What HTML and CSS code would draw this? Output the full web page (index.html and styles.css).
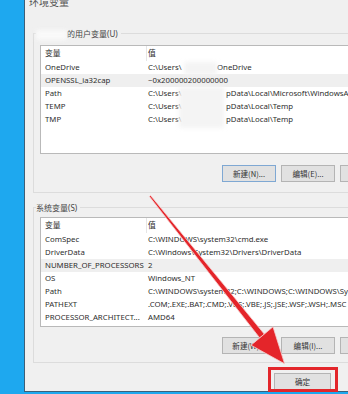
FILE: index.html
```html
<!DOCTYPE html>
<html lang="zh-CN">
<head>
    <meta charset="UTF-8">
    <title>环境变量</title>
    <link rel="stylesheet" href="styles.css">
</head>
<body>
    <div class="window">
        <h1 class="title">环境变量</h1>

        <div class="group group-user">
            <div class="group-label"><span class="name-blur"></span>的用户变量(U)</div>
            <div class="list list-user">
                <div class="row head"><div class="name">变量</div><div class="value">值</div></div>
                <div class="row"><div class="name">OneDrive</div><div class="value"><span class="pre short">C:\Users\</span>OneDrive</div></div>
                <div class="row sel"><div class="name">OPENSSL_ia32cap</div><div class="value">~0x200000200000000</div></div>
                <div class="row"><div class="name">Path</div><div class="value"><span class="pre">C:\Users\</span>pData\Local\Microsoft\WindowsApps</div></div>
                <div class="row"><div class="name">TEMP</div><div class="value"><span class="pre">C:\Users\</span>pData\Local\Temp</div></div>
                <div class="row"><div class="name">TMP</div><div class="value"><span class="pre">C:\Users\</span>pData\Local\Temp</div></div>
            </div>
            <div class="btns">
                <button class="default">新建(N)...</button>
                <button>编辑(E)...</button>
                <button>删除(D)</button>
            </div>
        </div>

        <div class="group group-sys">
            <div class="group-label">系统变量(S)</div>
            <div class="list list-sys">
                <div class="row head"><div class="name">变量</div><div class="value">值</div></div>
                <div class="row"><div class="name">ComSpec</div><div class="value">C:\WINDOWS\system32\cmd.exe</div></div>
                <div class="row"><div class="name">DriverData</div><div class="value">C:\Windows\System32\Drivers\DriverData</div></div>
                <div class="row sel"><div class="name">NUMBER_OF_PROCESSORS</div><div class="value">2</div></div>
                <div class="row"><div class="name">OS</div><div class="value">Windows_NT</div></div>
                <div class="row"><div class="name">Path</div><div class="value">C:\WINDOWS\system32;C:\WINDOWS;C:\WINDOWS\System32\Wbem;</div></div>
                <div class="row"><div class="name">PATHEXT</div><div class="value">.COM;.EXE;.BAT;.CMD;.VBS;.VBE;.JS;.JSE;.WSF;.WSH;.MSC</div></div>
                <div class="row"><div class="name">PROCESSOR_ARCHITECT...</div><div class="value">AMD64</div></div>
            </div>
            <div class="btns">
                <button>新建(W)...</button>
                <button>编辑(I)...</button>
                <button>删除(L)</button>
            </div>
        </div>

        <div class="footer">
            <button>确定</button>
        </div>
    </div>

    <!-- blurred user name in the paths -->
    <div class="path-blur blur-one"></div>
    <div class="path-blur blur-two"></div>
    <!-- annotation -->
    <div class="red-box"></div>
    <svg class="arrow" width="348" height="394" viewBox="0 0 348 394">
        <polygon points="150.6,195.5 149.4,196.5 259.7,337.9 264.3,334.1" fill="#e4252a" stroke="#f6d0d0" stroke-width="0.8"/>
        <polygon points="273,326.8 251,345.2 284.6,363.8" fill="#e4252a" stroke="#f6d0d0" stroke-width="0.8"/>
    </svg>
</body>
</html>
```

FILE: styles.css
```css
body {
    margin: 0;
    width: 348px;
    height: 394px;
    overflow: hidden;
    position: relative;
    background-color: #1ea8ef;
    font-family: "Noto Sans", "Noto Sans CJK SC", sans-serif;
    font-size: 7.8px;
    color: #2e2e2e;
}

.window {
    margin-left: 24px;
    height: 391px;
    background-color: #f0f0f0;
    border-left: 1px solid #3d5f78;
    border-bottom: 1px solid #3d5f78;
    overflow: hidden;
}

.title {
    margin: -4px 0 0 0;
    padding-left: 4px;
    font-size: 10px;
    line-height: 12px;
    font-weight: normal;
    color: #555;
}

.group {
    margin-left: 8px;
    margin-right: -30px;
    border: 1px solid #dcdcdc;
    border-right: none;
    padding-left: 6px;
}

.group-user {
    margin-top: 25px;
    padding-bottom: 10px;
}

.group-sys {
    margin-top: 14px;
    padding-bottom: 8px;
}

.group-label {
    display: table;
    margin: -7px 0 0 -4px;
    padding-right: 3px;
    line-height: 14px;
    font-size: 8px;
    color: #444;
    background-color: #f0f0f0;
}

.name-blur {
    display: inline-block;
    width: 31px;
    height: 10px;
    vertical-align: middle;
    background-color: #f9f9f9;
    filter: blur(2px);
}

.list {
    box-sizing: border-box;
    background: white;
    border: 1px solid #b9b9b9;
    overflow: hidden;
}

.list-user {
    margin-top: 4px;
    height: 109px;
}

.list-sys {
    margin-top: 2px;
    height: 110px;
}

.row {
    display: flex;
    height: 13px;
    line-height: 13px;
    white-space: nowrap;
}

.row.head {
    height: 15px;
    line-height: 15px;
}

.row.sel {
    background-color: #efefef;
}

.name {
    width: 101px;
    padding-left: 4px;
    flex-shrink: 0;
    overflow: hidden;
}

.head .name {
    border-right: 1px solid #e5e5e5;
}

.value {
    padding-left: 2px;
}

.head .value {
    padding-left: 1px;
}

.pre {
    display: inline-block;
    width: 78px;
}

.pre.short {
    width: 69px;
}

.btns {
    display: flex;
    gap: 5px;
    padding-left: 182px;
    margin-top: 11px;
}

.group-sys .btns {
    margin-top: 10px;
}

button {
    box-sizing: border-box;
    width: 54px;
    height: 17px;
    padding: 0;
    flex-shrink: 0;
    font-family: "Noto Sans CJK SC", sans-serif;
    font-size: 7.6px;
    color: #333;
    background-color: #e1e1e1;
    border: 1px solid #b4b4b4;
}

button.default {
    border-color: #7fa8d3;
}

.footer {
    margin-top: 10px;
    padding-left: 249px;
}

.footer button {
    width: 57px;
}

.path-blur {
    position: absolute;
    background-color: #f4f4f4;
    filter: blur(2px);
}

.blur-one {
    left: 184px;
    top: 62px;
    width: 33px;
    height: 13px;
}

.blur-two {
    left: 179px;
    top: 87px;
    width: 45px;
    height: 41px;
}

.red-box {
    position: absolute;
    left: 268px;
    top: 367px;
    width: 70px;
    height: 25px;
    box-sizing: border-box;
    border: 3px solid #e3262b;
}

.arrow {
    position: absolute;
    left: 0;
    top: 0;
    pointer-events: none;
}
```
